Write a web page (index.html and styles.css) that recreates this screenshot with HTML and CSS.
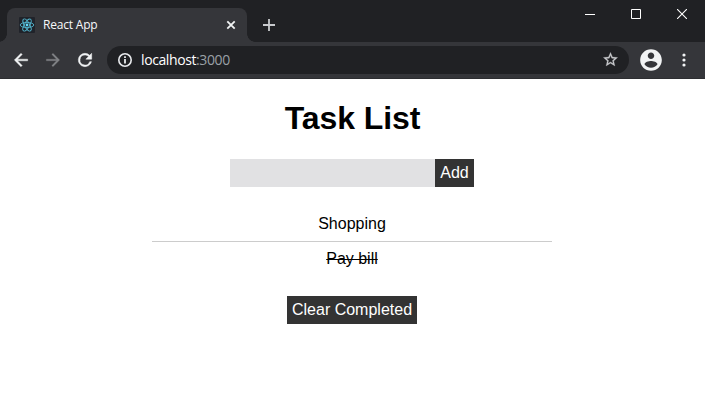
FILE: index.html
```html
<!DOCTYPE html>
<html lang="en">
<head>
<meta charset="utf-8">
<title>React App</title>
<link rel="stylesheet" href="styles.css">
</head>
<body>
<header class="browser">
  <div class="tabstrip">
    <div class="tab">
      <svg class="favicon" width="16" height="16" viewBox="0 0 16 16">
        <rect width="16" height="16" rx="1" fill="#20232a"/>
        <g fill="none" stroke="#52b5ce" stroke-width=".9">
          <ellipse cx="8" cy="8" rx="6.8" ry="2.6"/>
          <ellipse cx="8" cy="8" rx="6.8" ry="2.6" transform="rotate(60 8 8)"/>
          <ellipse cx="8" cy="8" rx="6.8" ry="2.6" transform="rotate(120 8 8)"/>
        </g>
        <circle cx="8" cy="8" r="1.4" fill="#61dafb"/>
      </svg>
      <span class="tab-title">React App</span>
      <svg class="tab-close" width="10" height="10" viewBox="0 0 10 10"><path d="M1.3 1.3l7.4 7.4M8.7 1.3L1.3 8.7" stroke="#f1f3f4" stroke-width="1.8"/></svg>
    </div>
    <svg class="new-tab" width="12" height="12" viewBox="0 0 12 12"><path d="M6 0v12M0 6h12" stroke="#c8cacd" stroke-width="1.8"/></svg>
    <div class="window-controls">
      <svg width="10" height="10" viewBox="0 0 10 10"><path d="M0 5.5h10" stroke="#fff"/></svg>
      <svg width="10" height="10" viewBox="0 0 10 10"><path d="M.5.5h9v9h-9z" fill="none" stroke="#fff"/></svg>
      <svg width="10" height="10" viewBox="0 0 10 10"><path d="M0 0l10 10M10 0L0 10" stroke="#fff" stroke-width="1.1"/></svg>
    </div>
  </div>
  <div class="toolbar">
    <svg class="nav" width="20" height="20" viewBox="0 0 24 24" fill="#f1f3f4" stroke="#f1f3f4" stroke-width=".5"><path d="M20 11H7.83l5.59-5.59L12 4l-8 8 8 8 1.41-1.41L7.83 13H20v-2z"/></svg>
    <svg class="nav" width="20" height="20" viewBox="0 0 24 24" fill="#818386" stroke="#818386" stroke-width=".3"><path d="M12 4l-1.41 1.41L16.17 11H4v2h12.17l-5.58 5.59L12 20l8-8z"/></svg>
    <svg class="nav" width="20" height="20" viewBox="0 0 24 24" fill="#f1f3f4" stroke="#f1f3f4" stroke-width=".6"><path d="M17.65 6.35A7.96 7.96 0 0 0 12 4a8 8 0 1 0 7.73 10h-2.08A6 6 0 1 1 12 6c1.66 0 3.14.69 4.22 1.78L13 11h7V4l-2.35 2.35z"/></svg>
    <div class="omnibox">
      <svg width="16" height="16" viewBox="0 0 16 16"><circle cx="8" cy="8" r="6.2" fill="none" stroke="#e8eaed" stroke-width="1.6"/><path d="M8 7v4.500M8 4.300v1.800" stroke="#e8eaed" stroke-width="1.800"/></svg>
      <span class="url">localhost<span class="port">:3000</span></span>
      <svg class="star" width="17" height="17" viewBox="0 0 24 24" fill="#c8cacd" stroke="#c8cacd" stroke-width=".4"><path d="M22 9.240l-7.190-.620L12 2 9.190 8.630 2 9.240l5.460 4.730L5.820 21 12 17.270 18.180 21l-1.630-7.030L22 9.240zM12 15.400l-3.760 2.270 1-4.280-3.320-2.880 4.380-.380L12 6.100l1.710 4.040 4.380.38-3.320 2.880 1 4.280L12 15.400z"/></svg>
    </div>
    <svg class="avatar" width="26" height="26" viewBox="0 0 24 24" fill="#f1f3f4"><path d="M12 2C6.480 2 2 6.480 2 12s4.480 10 10 10 10-4.480 10-10S17.520 2 12 2zm0 3c1.660 0 3 1.340 3 3s-1.340 3-3 3-3-1.340-3-3 1.340-3 3-3zm0 14.200a7.200 7.200 0 0 1-6-3.220c.03-1.990 4-3.080 6-3.080s5.970 1.090 6 3.080a7.200 7.200 0 0 1-6 3.220z"/></svg>
    <svg class="menu" width="4" height="14" viewBox="0 0 4 14" fill="#f1f3f4"><circle cx="2" cy="2" r="1.600"/><circle cx="2" cy="7" r="1.600"/><circle cx="2" cy="12" r="1.600"/></svg>
  </div>
</header>
<main class="app">
  <h1>Task List</h1>
  <form class="add-form">
    <input type="text" aria-label="Task">
    <button type="button">Add</button>
  </form>
  <ul class="tasks">
    <li>Shopping</li>
    <li class="done">Pay bill</li>
  </ul>
  <button class="clear" type="button">Clear Completed</button>
</main>
</body>
</html>
```
FILE: styles.css
```css
* { box-sizing: border-box; }
body {
  margin: 0;
  background: #fff;
  color: #000;
  font: 16px/18px "Liberation Sans", Arial, sans-serif;
  overflow: hidden;
}
svg { display: block; flex: none; }
.browser { font-family: "Open Sans", "Noto Sans", sans-serif; }
.tabstrip {
  display: flex;
  height: 42px;
  padding: 8px 18px 0 7px;
  background: #202124;
}
.tab {
  position: relative;
  display: flex;
  align-items: center;
  width: 240px;
  height: 34px;
  padding: 0 11px 0 12px;
  background: #35363a;
  border-radius: 8px 8px 0 0;
}
.tab::before, .tab::after {
  content: "";
  position: absolute;
  bottom: 0;
  width: 8px;
  height: 8px;
}
.tab::before { left: -8px; background: radial-gradient(circle at 0 0, transparent 7.5px, #35363a 8px); }
.tab::after { right: -8px; background: radial-gradient(circle at 100% 0, transparent 7.5px, #35363a 8px); }
.tab-title {
  margin-left: 8px;
  color: #f8f9fa;
  font-size: 12px;
  letter-spacing: -.2px;
}
.tab-close { margin-left: auto; }
.new-tab { margin: 11px 0 0 16px; }
.window-controls {
  display: flex;
  gap: 36px;
  margin: 1px 0 0 auto;
}
.toolbar {
  display: flex;
  align-items: center;
  height: 37px;
  padding: 0 19px 1px 11px;
  background: #35363a;
  border-bottom: 1px solid #2d2e31;
}
.nav { margin-right: 12px; }
.omnibox {
  display: flex;
  align-items: center;
  flex: 1;
  height: 28px;
  padding: 0 10px;
  background: #202124;
  border-radius: 14px;
}
.url {
  margin-left: 8px;
  color: #fff;
  font-size: 14px;
  letter-spacing: -.4px;
}
.port { color: #9aa0a6; }
.star { margin-left: auto; }
.avatar { margin: 0 18px 0 9px; }
.app {
  display: flex;
  flex-direction: column;
  align-items: center;
  width: 400px;
  margin: 0 0 0 152px;
  padding-top: 21px;
}
h1 {
  margin: 0 0 22px;
  padding-left: 1px;
  font-size: 32px;
  line-height: 37px;
  letter-spacing: -.1px;
}
.add-form { display: flex; margin: 0 0 20px; }
input {
  width: 205px;
  height: 28px;
  padding: 5px;
  border: 0;
  background: #e1e1e3;
  font: inherit;
}
button {
  height: 28px;
  padding: 5px;
  border: 0;
  background: #333;
  color: #fff;
  font: inherit;
  white-space: nowrap;
}
.tasks {
  width: 400px;
  margin: 0 0 20px;
  padding: 0;
  list-style: none;
  text-align: center;
}
.tasks li { padding: 8px 0; }
.tasks li + li { border-top: 1px solid #ccc; }
.done { text-decoration: line-through; }
```
